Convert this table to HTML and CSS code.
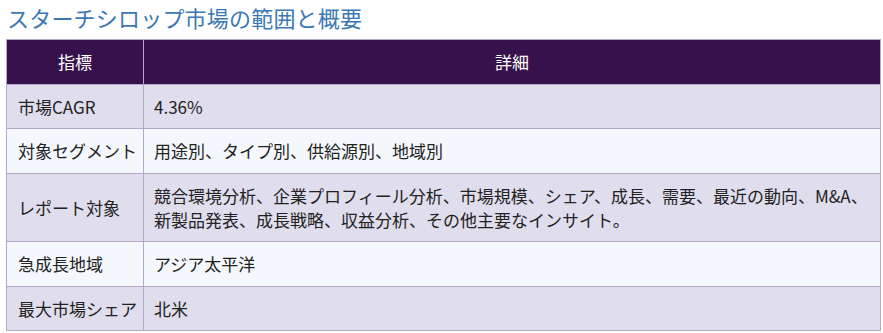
FILE: index.html
```html
<!DOCTYPE html>
<html lang="ja">
<head>
<meta charset="utf-8">
<title>スターチシロップ市場の範囲と概要</title>
<link rel="stylesheet" href="styles.css">
</head>
<body>
<h2 class="title">スターチシロップ市場の範囲と概要</h2>
<table class="scope">
  <thead>
    <tr><th class="c1">指標</th><th>詳細</th></tr>
  </thead>
  <tbody>
    <tr class="odd"><td>市場CAGR</td><td>4.36%</td></tr>
    <tr class="even"><td>対象セグメント</td><td>用途別、タイプ別、供給源別、地域別</td></tr>
    <tr class="odd"><td>レポート対象</td><td>競合環境分析、企業プロフィール分析、市場規模、シェア、成長、需要、最近の動向、M&amp;A、新製品発表、成長戦略、収益分析、その他主要なインサイト。</td></tr>
    <tr class="even"><td>急成長地域</td><td>アジア太平洋</td></tr>
    <tr class="odd"><td>最大市場シェア</td><td>北米</td></tr>
  </tbody>
</table>
</body>
</html>
```
FILE: styles.css
```css
html, body {
  margin: 0;
  padding: 0;
  background: #ffffff;
}
body {
  padding: 0 2px 0 6px;
  font-family: "Noto Sans CJK JP", "Noto Sans", sans-serif;
  color: #222222;
}
.title {
  margin: 0;
  padding: 2px 0 0 1px;
  height: 39px;
  box-sizing: border-box;
  font-size: 22px;
  line-height: 30px;
  font-weight: 400;
  color: #3b78b5;
  letter-spacing: 0.2px;
}
.scope {
  width: 875px;
  border-collapse: collapse;
  font-size: 17px;
  line-height: 24px;
}
.scope th, .scope td {
  border: 1px solid #b3a7cb;
  padding: 10px 10px 9.5px;
  text-align: left;
  vertical-align: middle;
}
.scope th {
  background: #36114b;
  color: #ffffff;
  font-weight: 400;
  text-align: center;
}
.scope .c1 {
  width: 116px;
}
.scope td:first-child {
  padding-left: 11px;
  padding-right: 4px;
  white-space: nowrap;
}
.odd td {
  background: #e0dded;
}
.even td {
  background: #f4f8fc;
}
```
